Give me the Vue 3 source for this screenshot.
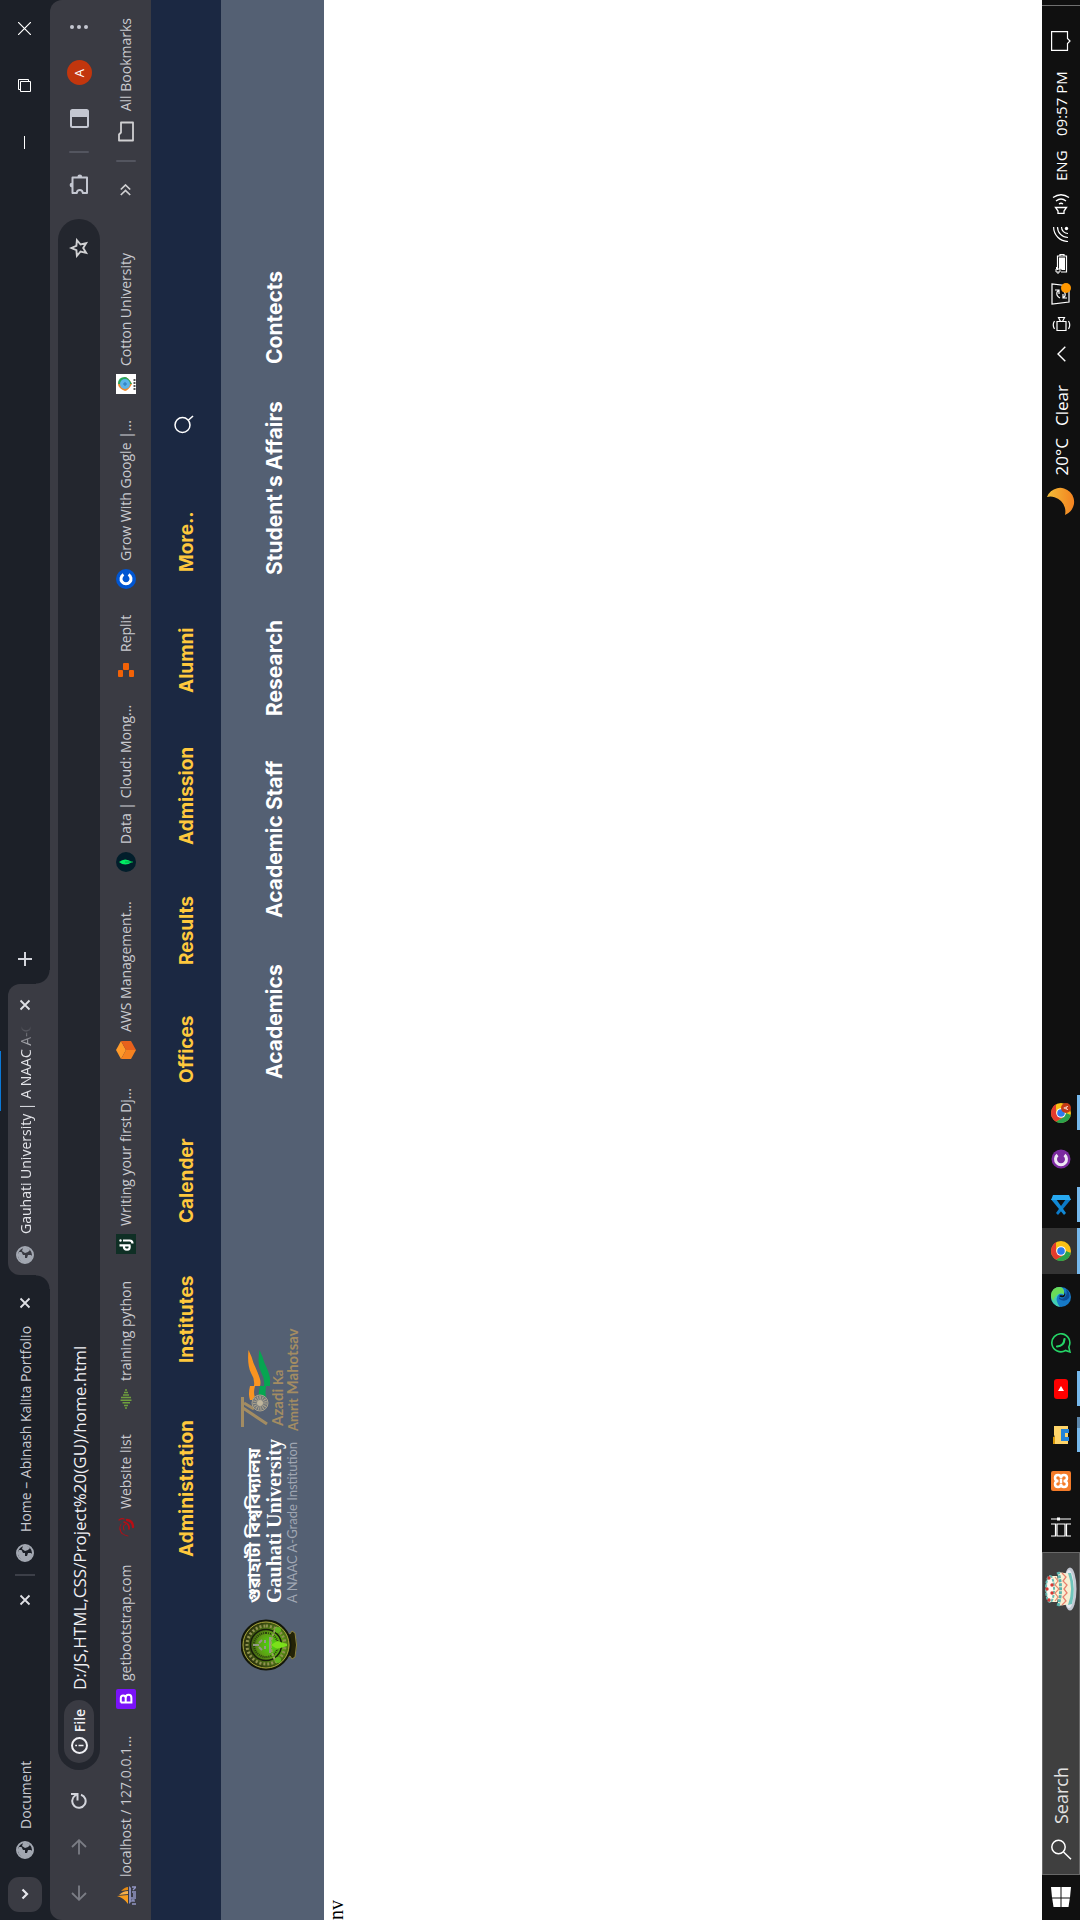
<script setup>
import { ref } from 'vue'

const address = ref('D:/JS,HTML,CSS/Project%20(GU)/home.html')
const query = ref('')

const tabs = [
  { title: 'Document', active: false },
  { title: 'Home – Abinash Kalita Portfolio', active: false },
  { title: 'Gauhati University | A NAAC A-G', active: true }
]

const bookmarks = [
  { icon: 'pma', label: 'localhost / 127.0.0.1...', width: 196 },
  { icon: 'bootstrap', label: 'getbootstrap.com', width: 172 },
  { icon: 'swirl', label: 'Website list', width: 128 },
  { icon: 'bars', label: 'training python', width: 155 },
  { icon: 'django', label: 'Writing your first Dj...', width: 194 },
  { icon: 'aws', label: 'AWS Management...', width: 188 },
  { icon: 'mongo', label: 'Data | Cloud: Mong...', width: 192 },
  { icon: 'replit', label: 'Replit', width: 91 },
  { icon: 'coursera', label: 'Grow With Google |...', width: 195 },
  { icon: 'cotton', label: 'Cotton University', width: 170 }
]

const topLinks = [
  { label: 'Administration', width: 194 },
  { label: 'Institutes', width: 140 },
  { label: 'Calender', width: 140 },
  { label: 'Offices', width: 118 },
  { label: 'Results', width: 120 },
  { label: 'Admission', width: 152 },
  { label: 'Alumni', width: 121 },
  { label: 'More..', width: 138 }
]

const mainLinks = [
  { label: 'Academics', width: 161 },
  { label: 'Academic Staff', width: 202 },
  { label: 'Research', width: 141 },
  { label: "Student's Affairs", width: 211 },
  { label: 'Contects', width: 92 }
]

const apps = [
  { name: 'taskview', state: '' },
  { name: 'xampp', state: '' },
  { name: 'explorer', state: 'open stacked' },
  { name: 'youtube', state: 'open' },
  { name: 'whatsapp', state: '' },
  { name: 'edge', state: '' },
  { name: 'chrome', state: 'current' },
  { name: 'vscode', state: 'open' },
  { name: 'c', state: '' },
  { name: 'chrome-profile', state: 'open' }
]
</script>

<template>
  <div class="viewport">
    <div class="desktop">
      <header class="tabstrip">
        <span class="loader"></span>
        <button class="tab-search" aria-label="Search tabs">
          <svg width="12" height="10" viewBox="0 0 12 10"><path d="M1.500 2.500 6 7 10.500 2.500" fill="none" stroke="#e6e7ec" stroke-width="2.200" /></svg>
        </button>
        <div class="tabs">
          <div v-for="t in tabs" :key="t.title" class="tab" :class="{ active: t.active }">
            <svg class="globe" width="18" height="18" viewBox="0 0 18 18">
              <circle cx="9" cy="9" r="8" fill="none" stroke="#a2a7b1" stroke-width="2" />
              <path d="M2 6 5 3 9 1.500 12 3 12 5.500 9 7 9 9 6 9 6 11 9 12 9 15 7 17 3 14 1 10Z M13 6 16 7 17 10 14 14 12 12 11 9Z" fill="#a2a7b1" />
            </svg>
            <span class="tab-title">{{ t.title }}</span>
            <button class="tab-close" aria-label="Close tab">
              <svg width="12" height="12" viewBox="0 0 12 12"><path d="M1.500 1.500 10.500 10.500 M10.500 1.500 1.500 10.500" stroke="#dfe0e5" stroke-width="1.800" /></svg>
            </button>
          </div>
        </div>
        <button class="new-tab" aria-label="New tab">
          <svg width="14" height="14" viewBox="0 0 14 14"><path d="M7 0V14M0 7H14" stroke="#d3d5dc" stroke-width="2" /></svg>
        </button>
        <div class="window-controls">
          <button aria-label="Minimise"><svg width="13" height="13"><path d="M0 6.500H13" stroke="#fff" /></svg></button>
          <button aria-label="Restore"><svg width="13" height="13"><path d="M.5 2.500H10.500V12.500H.5Z M2.500 2.500V.5H12.500V10.500H10.500" fill="none" stroke="#fff" /></svg></button>
          <button aria-label="Close"><svg width="13" height="13"><path d="M0 0 13 13M13 0 0 13" stroke="#fff" stroke-width="1.200" /></svg></button>
        </div>
      </header>

      <div class="toolbar">
        <button class="tool" aria-label="Back"><svg width="16" height="16" viewBox="0 0 16 16"><path d="M15.500 8H1.500M8 1 1.200 8 8 15" fill="none" stroke="#7b7d85" stroke-width="1.800" /></svg></button>
        <button class="tool" aria-label="Forward"><svg width="16" height="16" viewBox="0 0 16 16"><path d="M.5 8H14.500M8 1 14.800 8 8 15" fill="none" stroke="#7b7d85" stroke-width="1.800" /></svg></button>
        <button class="tool" aria-label="Reload"><svg width="16" height="16" viewBox="0 0 16 16"><path d="M14.300 10A6.700 6.700 0 1 1 13.500 4.200L14.500 6" fill="none" stroke="#d3d5dc" stroke-width="2" /><path d="M15 0V6.500H8.500" fill="none" stroke="#d3d5dc" stroke-width="2" /></svg></button>
        <div class="omnibox">
          <button class="chip">
            <svg width="17" height="17" viewBox="0 0 17 17"><circle cx="8.500" cy="8.500" r="7.500" fill="none" stroke="#f0f0f4" stroke-width="2" /><path d="M8.500 7.500V12.500M8.500 4.200V6" stroke="#f0f0f4" stroke-width="1.700" /></svg>
            <span>File</span>
          </button>
          <input v-model="address" class="address" type="text" aria-label="Address" />
          <button class="star" aria-label="Bookmark this page">
            <svg width="20" height="20" viewBox="0 0 20 20"><path d="M10 2.200 12.200 7.400 17.800 7.900 13.500 11.600 14.800 17.100 10 14.200 5.200 17.100 6.500 11.600 2.200 7.900 7.800 7.400Z" fill="none" stroke="#d0d0d2" stroke-width="1.900" /></svg>
          </button>
        </div>
        <button class="tool" aria-label="Extensions">
          <svg width="22" height="22" viewBox="0 0 22 22"><path d="M3 4.500H18.500V19H3V14.800Q6 14.500 6 11.800 6 9 3 8.800Z" fill="none" stroke="#c4c7d1" stroke-width="2" stroke-linejoin="round" /><path d="M8.500 4A2.400 2.400 0 0 1 13.300 4ZM19 9.400A2.400 2.400 0 0 1 19 14.200Z" fill="#c4c7d1" /></svg>
        </button>
        <span class="divider"></span>
        <button class="tool" aria-label="Side panel">
          <svg width="19" height="19" viewBox="0 0 19 19"><rect x="1" y="1" width="17" height="17" rx="1.500" fill="none" stroke="#c4c7d1" stroke-width="2" /><path d="M11 1H18V18H11Z" fill="#c4c7d1" /></svg>
        </button>
        <button class="tool" aria-label="Profile"><span class="avatar">A</span></button>
        <button class="tool" aria-label="Menu"><svg width="4" height="18" viewBox="0 0 4 18"><g fill="#c4c7d1"><circle cx="2" cy="2" r="2" /><circle cx="2" cy="9" r="2" /><circle cx="2" cy="16" r="2" /></g></svg></button>
      </div>

      <nav class="bookmarks" aria-label="Bookmarks">
        <a v-for="b in bookmarks" :key="b.label" href="#" class="bookmark" :style="{ width: b.width + 'px' }">
          <svg width="20" height="20" viewBox="0 0 20 20">
            <g v-if="b.icon === 'pma'">
              <path d="M9 1 10 12H1Q7 8 9 1Z" fill="#f89c1c" /><path d="M10 3Q14 7 14 12H11Z" fill="#f7b04a" /><path d="M14 5Q18 9 18 12H15Z" fill="#e58a12" />
              <path d="M1 13H19L17 15H3Z" fill="#8b8fbb" /><path d="M1 16V20M3 16H5V18H3M7 15V20M9 17V20M11 17V20M13 16V20M15 17 18 20M18 16V20" stroke="#9296c4" stroke-width="1.300" fill="none" />
            </g>
            <g v-else-if="b.icon === 'bootstrap'">
              <rect width="20" height="20" rx="2" fill="#7a12f8" />
              <path d="M6.500 4.800H11Q13.500 4.800 13.500 7.200 13.500 9.700 11 9.700H6.500M11 9.700Q14.200 9.700 14.200 12.600 14.200 15.400 11 15.400H6.500V4.800" fill="none" stroke="#fff" stroke-width="2" />
            </g>
            <g v-else-if="b.icon === 'swirl'" fill="none" stroke="#b80d14" stroke-linecap="round">
              <path d="M1 12Q2 5 8 4" stroke-width=".8" /><path d="M3 6Q8 2 13 5" stroke-width=".8" /><path d="M7 8Q12 6 13 10" stroke-width="1" /><path d="M10 17Q16 17 17 11" stroke-width="2.400" /><path d="M8 13Q13 14 15 8" stroke-width="1.600" /><path d="M17 3Q19 6 18 8" stroke-width="1.200" />
            </g>
            <g v-else-if="b.icon === 'bars'" stroke="#6f9f3e" stroke-width="1.500">
              <path d="M1 9V11M3.600 8V12M6.200 6.500V14M8.800 4.500V15.500M11.400 5V15M14 7V13M16.600 8V12M19 9V11" />
            </g>
            <g v-else-if="b.icon === 'django'">
              <rect width="20" height="20" fill="#0f2f25" />
              <path d="M8.700 3.500V13.500Q4.300 14.500 4.300 11 4.300 7.500 8.700 8M13.500 7V13.500Q13.500 16.500 10.500 16.500" fill="none" stroke="#fff" stroke-width="2.200" /><circle cx="13.500" cy="4.500" r="1.200" fill="#fff" />
            </g>
            <g v-else-if="b.icon === 'aws'">
              <path d="M10 0 19 5 10 10 1 5Z" fill="#ff9a2a" /><path d="M1 5 10 10V20L1 15Z" fill="#f58220" /><path d="M19 5 10 10V20L19 15Z" fill="#e8611c" />
            </g>
            <g v-else-if="b.icon === 'mongo'">
              <circle cx="10" cy="10" r="10" fill="#021e2b" /><path d="M10 3Q15 9 10 16 5 9 10 3Z" fill="#00ed64" /><path d="M10 9V17" stroke="#06a34b" />
            </g>
            <g v-else-if="b.icon === 'replit'" fill="#f26207">
              <rect x="3" y="2" width="7" height="5" rx="1" /><rect x="10" y="7" width="7" height="6" rx="1" /><rect x="3" y="13" width="7" height="5" rx="1" />
            </g>
            <g v-else-if="b.icon === 'coursera'">
              <circle cx="10" cy="10" r="10" fill="#0056d2" /><path d="M14.500 7.500A5 5 0 1 0 14.500 12.500" fill="none" stroke="#fff" stroke-width="3" />
            </g>
            <g v-else>
              <rect width="20" height="20" fill="#fff" /><path d="M3 9Q6 2 10 2T17 9Q17 12 10 16 3 12 3 9" fill="#ee8a2e" /><path d="M10 2Q17 2 17 9 17 12 10 16Z" fill="#28a55f" /><circle cx="10" cy="9" r="5" fill="#5cb3e8" /><path d="M8 9H12M10 7V11" stroke="#2878b8" /><path d="M4 18.500H16" stroke="#555" stroke-width="2" stroke-dasharray="2 1" />
            </g>
          </svg>
          <span>{{ b.label }}</span>
        </a>
        <button class="overflow" aria-label="More bookmarks"><svg width="12" height="11" viewBox="0 0 12 11"><path d="M1 .8 5.500 5.500 1 10.200M6.500 .8 11 5.500 6.500 10.200" fill="none" stroke="#d0d0d2" stroke-width="1.700" /></svg></button>
        <span class="divider"></span>
        <a href="#" class="all-bookmarks">
          <svg width="21" height="16" viewBox="0 0 21 16"><path d="M1.500 1H7.500L9.500 3H19.500V15H1.500Z" fill="none" stroke="#d0d0d2" stroke-width="1.800" stroke-linejoin="round" /></svg>
          <span>All Bookmarks</span>
        </a>
      </nav>

      <main class="page">
        <nav class="top-nav">
          <a v-for="l in topLinks" :key="l.label" href="#" :style="{ width: l.width + 'px' }">{{ l.label }}</a>
          <button aria-label="Search"><svg width="19" height="20" viewBox="0 0 19 20"><circle cx="9" cy="8.500" r="7.500" fill="none" stroke="#fff" stroke-width="1.500" /><path d="M13.500 14 18 19" stroke="#fff" stroke-width="1.600" /></svg></button>
        </nav>
        <div class="main-nav">
          <div class="brand">
            <svg class="emblem" width="52" height="56" viewBox="0 0 52 56">
              <defs><radialGradient id="glow" cx=".5" cy=".6" r=".5"><stop offset="0" stop-color="#46e00d" /><stop offset=".5" stop-color="#5e9d15" /><stop offset="1" stop-color="#30380f" /></radialGradient></defs>
              <path d="M13 44Q26 51 39 44L37 49 40 51 38 54Q26 57 14 54L12 51 15 49Z" fill="#242306" stroke="#8b8340" />
              <circle cx="26" cy="25" r="24.500" fill="url(#glow)" stroke="#14180b" stroke-width="2" />
              <circle cx="26" cy="25" r="23" fill="none" stroke="#a8a63d" />
              <circle cx="26" cy="25" r="19" fill="none" stroke="#8f9150" stroke-width="3" stroke-dasharray="2 2" />
              <circle cx="26" cy="25" r="15.500" fill="none" stroke="#161c0b" stroke-width="1.500" />
              <circle cx="26" cy="25" r="12" fill="none" stroke="#283b10" stroke-width="2" stroke-dasharray="1 1" />
              <path d="M18 29H34M21 21 24 18M28 18 31 21M22 24H25M28 24H31M26 12V18" stroke="#95988a" stroke-width="2" />
              <path d="M8 36Q26 24 44 36" fill="none" stroke="#96a35c" stroke-width="2" stroke-dasharray="3 1" />
              <path d="M26 30 30 36 27 46H25L22 36Z" fill="#7be01a" /><circle cx="11" cy="37" r="3" fill="#60b31d" /><circle cx="41" cy="37" r="3" fill="#60b31d" />
            </svg>
            <div class="brand-text">
              <span class="assamese" lang="as">গুৱাহাটী বিশ্ববিদ্যালয়</span>
              <span class="english">Gauhati University</span>
              <span class="grade">A NAAC A-Grade Institution</span>
            </div>
            <div class="azadi">
              <svg width="82" height="29" viewBox="0 0 82 29">
                <path d="M4 1.500H34M23 2 7 26M28 3 22 13" fill="none" stroke="#a38c62" stroke-width="3" />
                <path d="M31 9Q37 7 45 9V14Q38 12 34 14L31 12Z" fill="#fa9420" />
                <path d="M45 13Q52 14 58 10 66 6 81 7.500 74 11 68 12.500 58 17 52 19 48 20 45 19Z" fill="#fa9420" />
                <path d="M32 18Q38 17 45 19V25Q38 24 32 25Z" fill="#06a651" />
                <path d="M45 23Q52 24 59 20 67 16 81 18.500 74 22 68 23.500 59 28 53 29 48 30 45 29Z" fill="#06a651" />
                <circle cx="28" cy="19" r="8" fill="#6d7378" stroke="#a8a08c" /><circle cx="28" cy="19" r="5" fill="none" stroke="#a8a08c" stroke-width="4" stroke-dasharray="1 1" /><circle cx="28" cy="19" r="3" fill="#c0b69c" />
              </svg>
              <span class="azadi-line">Azadi <small>Ka</small></span>
              <span class="amrit-line"><small>Amrit</small> Mahotsav</span>
            </div>
          </div>
          <nav class="main-links">
            <a v-for="l in mainLinks" :key="l.label" href="#" :style="{ width: l.width + 'px' }">{{ l.label }}</a>
          </nav>
        </div>
        <p class="body-text">nv</p>
      </main>

      <footer class="taskbar">
        <button class="start" aria-label="Start"><svg width="20" height="20" viewBox="0 0 20 20"><path d="M0 2.500 8.500 1.200V9.500H0ZM9.500 1 20 0V9.500H9.500ZM0 10.500H8.500V18.800L0 17.500ZM9.500 10.500H20V20L9.500 19Z" fill="#fff" /></svg></button>
        <label class="search">
          <svg width="21" height="21" viewBox="0 0 21 21"><circle cx="13" cy="7.500" r="6.700" fill="none" stroke="#fff" stroke-width="1.500" /><path d="M8 12.500 .7 20" stroke="#fff" stroke-width="1.500" /></svg>
          <input v-model="query" type="text" placeholder="Search" aria-label="Search" />
          <svg class="cake" width="44" height="32" viewBox="0 0 44 32">
            <ellipse cx="22" cy="25" rx="21.500" ry="6.500" fill="#c3c8d2" /><ellipse cx="22" cy="24" rx="19" ry="5" fill="#e4e7ee" />
            <path d="M5 13H39L37 26Q22 31 7 26Z" fill="#f8efd2" /><path d="M6 23Q22 29 38 23V26Q22 31 7 27Z" fill="#6fc5bd" /><path d="M6 17 10 21 14 18 18 22 22 19 26 22 30 18 34 21 38 17" fill="none" stroke="#e9826f" stroke-width="1.300" />
            <path d="M5 13Q22 18 39 13" fill="none" stroke="#59b3ad" stroke-width="3" stroke-dasharray="3 1" />
            <path d="M9 4H35V12Q22 16 9 12Z" fill="#fff4d6" /><ellipse cx="22" cy="5" rx="13" ry="4" fill="#fffaf0" stroke="#68bcb5" stroke-width="2" stroke-dasharray="3 1" /><path d="M10 10 14 13 18 10 22 14 26 10 30 13 34 10" fill="none" stroke="#e98a70" stroke-width="1.200" />
            <g fill="#d83b35"><circle cx="11" cy="4" r="1.700" /><circle cx="18" cy="7" r="1.700" /><circle cx="26" cy="7" r="1.700" /><circle cx="33" cy="4" r="1.700" /><circle cx="22" cy="2" r="1.700" /></g>
          </svg>
        </label>
        <div class="apps">
          <button v-for="a in apps" :key="a.name" class="app" :class="a.state" :aria-label="a.name">
            <svg width="20" height="20" viewBox="0 0 20 20">
              <g v-if="a.name === 'taskview'" fill="none" stroke="#fff" stroke-width="1.200"><path d="M1 0V4.500H13V0M1 6H13V14H1ZM1 20V15.500H13V20M18 0V20" /><path d="M16.500 6H19.500V9H16.500Z" fill="#fff" stroke="none" /></g>
              <g v-else-if="a.name === 'xampp'"><rect width="20" height="20" rx="2" fill="#f47b29" /><path d="M10 7.500Q10 4 7 4T4 7 7 10Q4 10 4 13T7 16 10 12.500Q10 16 13 16T16 13 13 10Q16 10 16 7T13 4 10 7.500M7.500 10H12.500" fill="none" stroke="#fff" stroke-width="2.500" /></g>
              <g v-else-if="a.name === 'explorer'"><path d="M1 2H8L9 5H1Z" fill="#d99a09" /><path d="M1 4H8L10 3H19V17H1Z" fill="#ffd56a" /><path d="M4 18V10H16V18H12V14H8V18Z" fill="#2583d8" /></g>
              <g v-else-if="a.name === 'youtube'"><rect y="3" width="20" height="14" rx="3" fill="#f00" /><path d="M8 7 13 10 8 13Z" fill="#fff" /></g>
              <g v-else-if="a.name === 'whatsapp'" fill="none" stroke="#25d366"><path d="M1 19 2.500 14.500A9 9 0 1 1 6 17.800Z" stroke-width="1.600" /><path d="M6.500 6Q7 13 14 13.500" stroke-width="2.200" stroke-linecap="round" /></g>
              <g v-else-if="a.name === 'edge'"><circle cx="10" cy="10" r="10" fill="#1679c7" /><path d="M0 9Q2 0 11 0 20 1 20 9 19 13 15 13H12Q15 9 11 6.500 6 4 0 9Z" fill="#43cfb2" /><path d="M12 0Q20 1 20 9 19 13 15 13H13Q16 6 6 2Q9 0 12 0Z" fill="#6adb58" /><path d="M8 8Q4 14 9 18 14 20 18 15 12 17 9 13 7 10 10 8Z" fill="#0c4a94" /><path d="M12 10Q10 13 15 14 12 15 10 13 9 10 11 8Z" fill="#101010" /></g>
              <g v-else-if="a.name === 'vscode'"><path d="M0 7 2 5 16 15V20L14.500 19Z" fill="#0b79c7" /><path d="M0 13 2 15 16 5V0L14.500 1Z" fill="#1189d5" /><path d="M15 0 20 2V18L15 20Z" fill="#27a9f1" /></g>
              <g v-else-if="a.name === 'c'"><circle cx="10" cy="10" r="9.500" fill="#7b2aa0" /><path d="M14 6.500A5.500 5.500 0 1 0 14 13.500" fill="none" stroke="#eee6f3" stroke-width="3" /></g>
              <g v-else>
                <circle cx="10" cy="10" r="10" fill="#fbc116" /><path d="M1.340 5A10 10 0 0 1 18.660 5H10L5.670 12.500Z" fill="#e33b2e" /><path d="M1.340 5 5.670 12.500 10 15 8 19.800A10 10 0 0 1 1.340 5Z" fill="#2ba24c" /><circle cx="10" cy="10" r="4.800" fill="#fff" /><circle cx="10" cy="10" r="3.800" fill="#2d7bee" />
                <g v-if="a.name === 'chrome-profile'"><circle cx="15" cy="15" r="5" fill="#c33a16" /><path d="M13.300 17 15 12.800 16.700 17M14 15.600H16" fill="none" stroke="#f4c9bc" /></g>
              </g>
            </svg>
          </button>
        </div>
        <a href="#" class="weather">
          <svg width="28" height="28" viewBox="0 0 28 28"><defs><linearGradient id="moon" x1="0" y1="0" x2="0" y2="1"><stop offset="0" stop-color="#f3bd38" /><stop offset="1" stop-color="#f38220" /></linearGradient></defs><path d="M18 0A14 14 0 1 1 0 18 15 15 0 0 0 18 0Z" fill="url(#moon)" /></svg>
          <span>20°C</span><span>Clear</span>
        </a>
        <div class="tray">
          <button class="icon-cell" aria-label="Show hidden icons"><svg width="16" height="9" viewBox="0 0 16 9"><path d="M.7 8.300 8 1 15.300 8.300" fill="none" stroke="#fff" stroke-width="1.400" /></svg></button>
          <button class="icon-cell" aria-label="Meet now"><svg width="16" height="19" viewBox="0 0 16 19"><path d="M1.500 5H10.500V14H1.500ZM10.500 8.500 14.500 6.500V12.500L10.500 10.500M3 2.500Q7 0 11 2.500M3 16.500Q7 19 11 16.500" fill="none" stroke="#fff" stroke-width="1.200" /></svg></button>
          <button class="icon-cell" aria-label="Updates"><svg width="22" height="20" viewBox="0 0 22 20"><path d="M1 1H21L19 18H3Z" fill="none" stroke="#fff" stroke-width="1.200" /><path d="M7 9Q9 5 13 6L15 8M15 4V8H11M15 11Q13 15 9 14L7 12M7 16V12H11" fill="none" stroke="#fff" stroke-width="1.200" /><circle cx="17" cy="15" r="5" fill="#ff9800" /></svg></button>
          <button class="icon-cell" aria-label="Battery"><svg width="20" height="13" viewBox="0 0 20 13"><path d="M4 2.500H18V11.500H2V6M18 5H19.500V9H18" fill="none" stroke="#fff" stroke-width="1.200" /><path d="M6 4H16.500V10H4V7Z" fill="#fff" /><path d="M0 3H2V1H5V5H2V3M5 1.500H7M5 4.500H7" fill="none" stroke="#fff" /></svg></button>
          <button class="icon-cell" aria-label="Network"><svg width="16" height="16" viewBox="0 0 16 16"><g fill="none" stroke="#fff" stroke-width="1.200"><path d="M.5 15A14.500 14.500 0 0 1 15 .6" /><path d="M4.500 15A10.500 10.500 0 0 1 15 4.500" /><path d="M8.500 15A6.500 6.500 0 0 1 15 8.500" /></g><circle cx="13.500" cy="13.500" r="1.700" fill="#fff" /></svg></button>
          <button class="icon-cell" aria-label="Volume"><svg width="20" height="18" viewBox="0 0 20 18"><path d="M.6 6H3L6.500 3.500V14.500L3 12H.6ZM10 7Q11.500 9 10 11M13 4Q17 9 13 14M16.500 1Q22 9 16.500 17" fill="none" stroke="#fff" stroke-width="1.300" /></svg></button>
          <span class="lang">ENG</span>
          <span class="clock">09:57 PM</span>
          <button class="notice" aria-label="Notifications"><svg width="20" height="20" viewBox="0 0 20 20"><path d="M.6 .6H19.400V16.500H12.500L10 19 7.500 16.500H.6Z" fill="none" stroke="#fff" stroke-width="1.200" /></svg></button>
        </div>
      </footer>
    </div>
  </div>
</template>

<style>
body {
  margin: 0;
}
</style>

<style scoped>
.viewport {
  width: 100vw;
  height: 100vh;
  overflow: hidden;
}
/* The whole desktop is turned a quarter turn counter-clockwise. */
.desktop {
  width: 100vh;
  height: 100vw;
  transform: translateY(100vh) rotate(-90deg);
  transform-origin: 0 0;
  display: flex;
  flex-direction: column;
  background: #1c2028;
  font-family: "Open Sans", "Noto Sans", sans-serif;
  font-size: 14px;
}
.desktop *,
.desktop *::before,
.desktop *::after {
  box-sizing: border-box;
}
svg {
  flex: none;
  display: block;
}
a {
  color: inherit;
  text-decoration: none;
  white-space: nowrap;
}
button {
  display: flex;
  align-items: center;
  justify-content: center;
  flex: none;
  padding: 0;
  border: 0;
  background: none;
  color: inherit;
  font: inherit;
}
input {
  min-width: 0;
  padding: 0;
  border: 0;
  outline: 0;
  background: none;
  color: inherit;
  font: inherit;
}

.tabstrip {
  position: relative;
  display: flex;
  height: 50px;
  padding: 8px 0 0 8px;
  color: #c8cad0;
}
.loader {
  position: absolute;
  top: 0;
  left: 809px;
  width: 60px;
  height: 1px;
  background: #0a78d7;
}
.tab-search {
  width: 35px;
  height: 34px;
  margin-right: 5px;
  border-radius: 11px;
  background: #3a3b43;
}
.tabs {
  display: flex;
}
.tab {
  position: relative;
  display: flex;
  align-items: center;
  width: 297px;
  height: 34px;
  padding: 0 19px 0 13px;
}
.tab:first-child::after {
  content: "";
  position: absolute;
  right: -1px;
  top: 7px;
  width: 2px;
  height: 20px;
  background: #3c3f48;
}
.tab.active {
  width: 291px;
  height: 42px;
  margin-left: 3px;
  padding: 0 15px 8px 11px;
  border-radius: 12px 12px 0 0;
  background: #3a3b43;
  color: #e4e5ea;
}
.tab.active::before,
.tab.active::after {
  content: "";
  position: absolute;
  bottom: 0;
  width: 14px;
  height: 14px;
}
.tab.active::before {
  right: 100%;
  background: radial-gradient(circle at 0 0, transparent 13px, #3a3b43 14px);
}
.tab.active::after {
  left: 100%;
  background: radial-gradient(circle at 100% 0, transparent 13px, #3a3b43 14px);
}
.tab-title {
  flex: 1;
  margin-left: 12px;
  white-space: nowrap;
}
.tab.active .tab-title {
  mask-image: linear-gradient(to right, #000 180px, transparent 208px);
}
.new-tab {
  width: 34px;
  height: 34px;
  margin-left: 8px;
}
.window-controls {
  display: flex;
  margin-left: auto;
}
.window-controls button {
  width: 57px;
  height: 32px;
}

.toolbar {
  display: flex;
  align-items: center;
  height: 50px;
  padding: 8px 4px 0;
  border-radius: 12px 12px 0 0;
  background: #3a3b43;
}
.tool {
  width: 46px;
  height: 42px;
}
.omnibox {
  display: flex;
  flex: 1;
  align-items: center;
  height: 42px;
  margin: 0 11px 0 8px;
  padding: 0 19px 0 7px;
  border-radius: 21px;
  background: #23262e;
  color: #f0f0f4;
}
.chip {
  width: 63px;
  height: 30px;
  gap: 5px;
  border-radius: 15px;
  background: #3a3b43;
  font-weight: 600;
}
.address {
  flex: 1;
  margin-left: 10px;
  font-size: 17px;
}
.avatar {
  width: 25px;
  height: 25px;
  border-radius: 50%;
  background: #c2360d;
  color: #fff;
  font-size: 13px;
  line-height: 25px;
}
.divider {
  width: 2px;
  height: 20px;
  margin: 0 9px;
  border-radius: 1px;
  background: #53555f;
}

.bookmarks {
  display: flex;
  align-items: center;
  height: 51px;
  padding: 0 18px 0 15px;
  background: #3a3b43;
  color: #c9cacf;
}
.bookmarks .divider {
  margin-right: 18px;
}
.bookmark,
.all-bookmarks {
  display: flex;
  align-items: center;
  gap: 8px;
}
.all-bookmarks {
  gap: 10px;
}
.overflow {
  width: 34px;
  height: 34px;
  margin: 0 2px 0 auto;
}

.page {
  flex: 1;
  background: #fff;
}
.top-nav {
  display: flex;
  align-items: center;
  height: 70px;
  padding-left: 363px;
  background: #1b2842;
  color: #ffc83d;
  font-family: Inter, sans-serif;
  font-size: 19px;
  font-weight: 700;
}
.top-nav button {
  padding-bottom: 5px;
}
.main-nav {
  display: flex;
  height: 103px;
  padding: 20px 0 0 249px;
  background: #546073;
  color: #fff;
}
.brand {
  display: flex;
  width: 592px;
}
.brand-text {
  display: flex;
  flex-direction: column;
  width: 172px;
  margin-left: 16px;
  padding-top: 4px;
  white-space: nowrap;
}
.assamese {
  font-family: "Noto Sans Bengali", "Noto Serif Bengali", "Open Sans", sans-serif;
  font-size: 18px;
  font-weight: 700;
  line-height: 20px;
}
.english {
  font-family: "Liberation Serif", serif;
  font-size: 20px;
  font-weight: 700;
  line-height: 18px;
}
.grade {
  color: #a0a7b3;
  font-family: Lato, sans-serif;
  font-size: 13px;
  line-height: 18px;
}
.azadi {
  display: flex;
  flex-direction: column;
  color: #a38c62;
  font-family: Lato, sans-serif;
  font-weight: 700;
}
.azadi-line {
  padding-left: 5px;
  font-size: 15px;
  line-height: 14px;
}
.amrit-line {
  font-size: 15px;
  line-height: 14px;
}
.azadi small {
  font-size: 13px;
}
.main-links {
  display: flex;
  align-items: center;
  height: 66px;
  font-family: Inter, sans-serif;
  font-size: 21px;
  font-weight: 700;
}
.body-text {
  margin: 0;
  font-family: "Liberation Serif", serif;
  font-size: 20px;
  line-height: 25px;
}

.taskbar {
  display: flex;
  align-items: center;
  height: 38px;
  background: #101010;
  color: #fff;
}
.start {
  width: 45px;
}
.search {
  display: flex;
  align-items: center;
  width: 323px;
  height: 38px;
  padding: 0 14px;
  border: 1px solid #686868;
  background: #3f3f3f;
}
.search input {
  flex: 1;
  margin-left: 15px;
  font-size: 18px;
}
.search input::placeholder {
  color: #e2e2e2;
  opacity: 1;
}
.apps {
  display: flex;
  height: 38px;
  margin: 0 auto 0 2px;
}
.app {
  position: relative;
  width: 46px;
}
.app.current {
  background: #343434;
}
.app.open::after,
.app.current::after {
  content: "";
  position: absolute;
  bottom: 0;
  left: 6px;
  width: 35px;
  height: 3px;
  background: #76b9ed;
}
.app.current::after {
  left: 0;
  width: 46px;
}
.app.stacked::after {
  background: linear-gradient(to right, #76b9ed 24px, #5d87ab 24px);
}
.weather {
  display: flex;
  align-items: center;
  gap: 12px;
  font-size: 17px;
}
.tray {
  display: flex;
  align-items: center;
  height: 38px;
  padding-right: 5px;
  margin-left: 16px;
  font-size: 15px;
}
.icon-cell {
  width: 30px;
}
.lang {
  width: 44px;
  padding-left: 8px;
}
.clock {
  width: 77px;
  padding-left: 9px;
  white-space: nowrap;
}
.notice {
  width: 63px;
  height: 38px;
  padding-right: 8px;
  border-right: 1px solid #707070;
}
</style>
